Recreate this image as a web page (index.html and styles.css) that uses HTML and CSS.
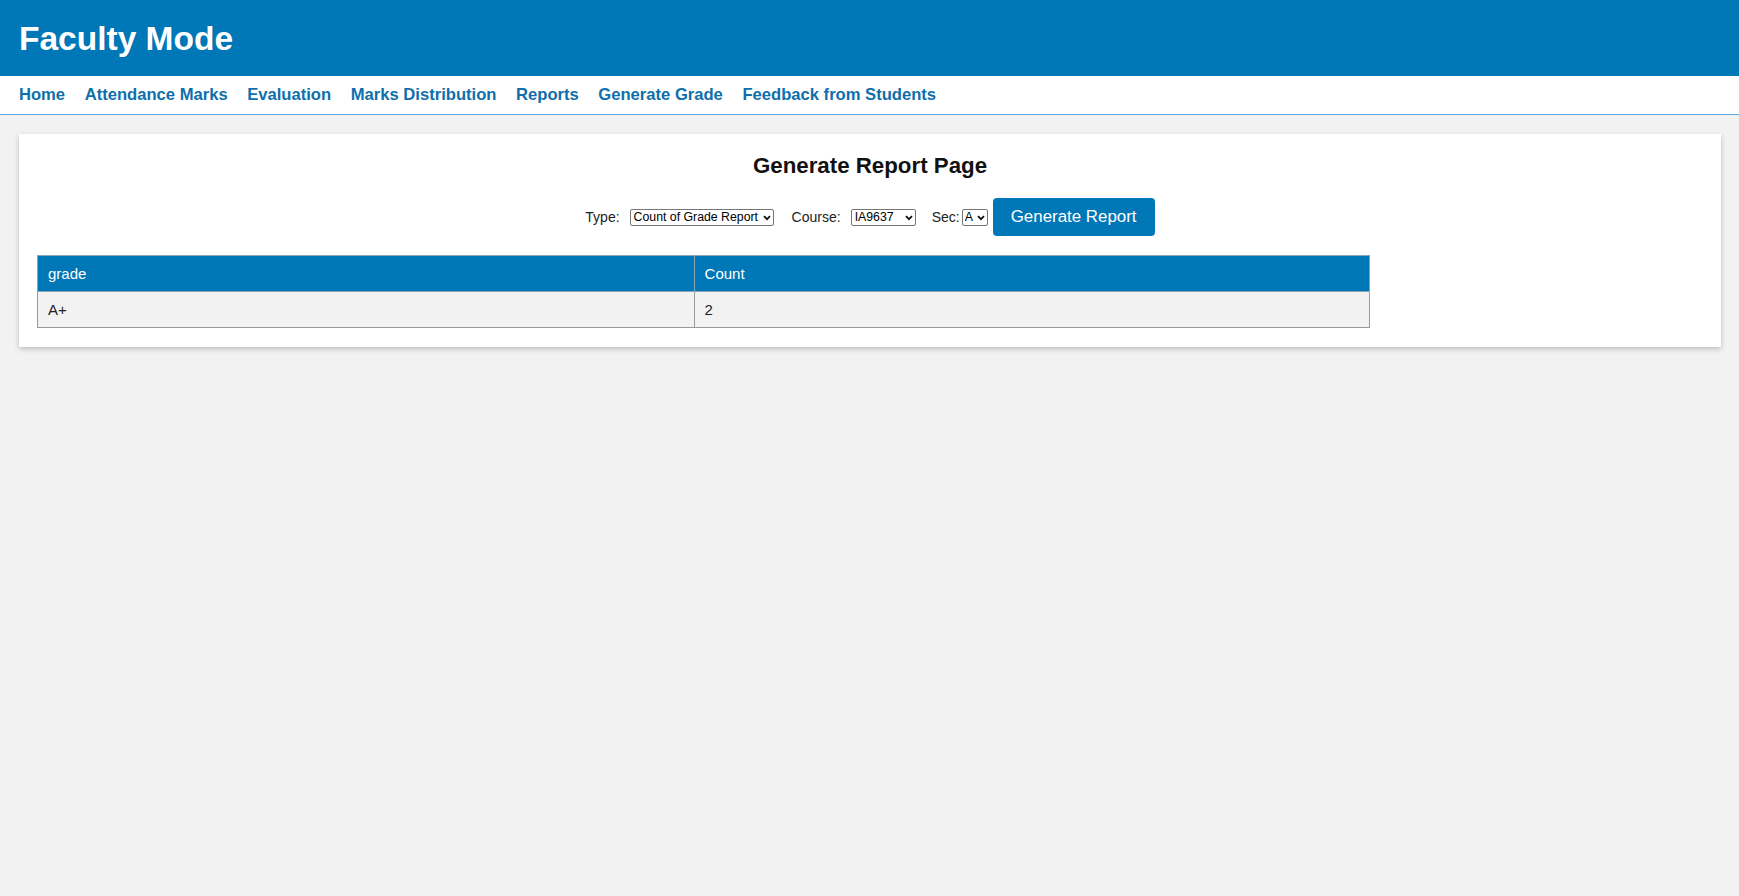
FILE: index.html
```html
<!DOCTYPE html>
<html lang="en">
<head>
<meta charset="utf-8">
<title>Faculty Mode</title>
<link rel="stylesheet" href="styles.css">
</head>
<body>
<header class="top">
  <h1 class="brand">Faculty Mode</h1>
</header>
<nav class="nav">
  <a class="nav-link" href="#">Home</a>
  <a class="nav-link" href="#">Attendance Marks</a>
  <a class="nav-link" href="#">Evaluation</a>
  <a class="nav-link" href="#">Marks Distribution</a>
  <a class="nav-link" href="#">Reports</a>
  <a class="nav-link" href="#">Generate Grade</a>
  <a class="nav-link" href="#">Feedback from Students</a>
</nav>
<main class="main">
  <section class="card">
    <h2 class="title">Generate Report Page</h2>
    <form class="filters">
      <label class="lbl lbl-type">Type:</label>
      <span class="sel-wrap wrap-type">
        <select class="sel"><option>Count of Grade Report</option></select>
        <svg class="chev" viewBox="0 0 8 6" width="8" height="6"><path d="M1 1.2 L4 4.2 L7 1.2" fill="none" stroke="#111" stroke-width="1.8"/></svg>
      </span>
      <label class="lbl lbl-course">Course:</label>
      <span class="sel-wrap wrap-course">
        <select class="sel"><option>IA9637</option></select>
        <svg class="chev" viewBox="0 0 8 6" width="8" height="6"><path d="M1 1.2 L4 4.2 L7 1.2" fill="none" stroke="#111" stroke-width="1.8"/></svg>
      </span>
      <label class="lbl lbl-sec">Sec:</label>
      <span class="sel-wrap wrap-sec">
        <select class="sel"><option>A</option></select>
        <svg class="chev" viewBox="0 0 8 6" width="8" height="6"><path d="M1 1.2 L4 4.2 L7 1.2" fill="none" stroke="#111" stroke-width="1.8"/></svg>
      </span>
      <button class="btn" type="button">Generate Report</button>
    </form>
    <table class="report">
      <thead>
        <tr><th class="c1">grade</th><th class="c2">Count</th></tr>
      </thead>
      <tbody>
        <tr><td>A+</td><td>2</td></tr>
      </tbody>
    </table>
  </section>
</main>
</body>
</html>
```
FILE: styles.css
```css
* { box-sizing: border-box; }
html, body { margin: 0; padding: 0; }
body {
  background: #f2f2f2;
  font-family: "Liberation Sans", Arial, sans-serif;
  color: #222;
  min-height: 896px;
}
.top {
  background: #0077b6;
  height: 76px;
  display: flex;
  align-items: center;
  padding-left: 19px;
}
.brand {
  margin: 0;
  color: #fff;
  font-size: 33.5px;
  font-weight: bold;
  line-height: 1;
  padding-top: 1px;
}
.nav {
  background: #fff;
  height: 39px;
  border-bottom: 1px solid #5ea6dc;
  display: flex;
  align-items: center;
  gap: 19.6px;
  padding-left: 19px;
}
.nav-link {
  color: #0f6fab;
  text-decoration: none;
  font-weight: bold;
  font-size: 16.6px;
}
.main {
  padding: 19px 18px 0 19px;
}
.card {
  background: #fff;
  box-shadow: 0 2px 5px rgba(0, 0, 0, 0.22);
  padding: 20px 18px 19px 18px;
}
.title {
  margin: 0;
  text-align: center;
  font-size: 22.3px;
  font-weight: bold;
  color: #111;
  line-height: 24px;
}
.filters {
  display: flex;
  justify-content: center;
  align-items: center;
  margin-top: 20px;
}
.lbl {
  font-size: 14px;
  color: #222;
}
.lbl-type, .lbl-course { margin-right: 10px; }
.lbl-sec { margin-right: 2px; }
.sel-wrap {
  position: relative;
  display: inline-flex;
  height: 17px;
}
.sel {
  -webkit-appearance: none;
  appearance: none;
  width: 100%;
  font-family: "Liberation Sans", Arial, sans-serif;
  font-size: 12.3px;
  height: 17px;
  line-height: 15px;
  padding: 0 0 0 3px;
  border: 1px solid #767676;
  border-radius: 2px;
  background: #fff;
  color: #000;
  outline: none;
}
.chev {
  position: absolute;
  right: 3px;
  top: 6px;
  pointer-events: none;
}
.wrap-type { width: 144px; margin-right: 18px; }
.wrap-course { width: 65px; margin-right: 16px; }
.wrap-sec { width: 26px; margin-right: 5px; }
.wrap-sec .sel { padding-left: 2px; }
.btn {
  font-family: "Liberation Sans", Arial, sans-serif;
  background: #0077b6;
  color: #fff;
  border: none;
  border-radius: 4px;
  font-size: 16.9px;
  width: 162px;
  height: 38px;
  padding: 0;
  cursor: pointer;
}
.report {
  margin-top: 19px;
  width: 80%;
  border-collapse: collapse;
  border: 1px solid #999;
  font-size: 15px;
}
.report th, .report td {
  text-align: left;
  padding: 0 10px;
  height: 36px;
  border: 1px solid #999;
  font-weight: normal;
}
.report th {
  background: #0077b6;
  color: #fff;
  border-color: #8aa4b8;
}
.report td {
  background: #f2f2f2;
  color: #222;
}
.c1 { width: 49.3%; }
```
